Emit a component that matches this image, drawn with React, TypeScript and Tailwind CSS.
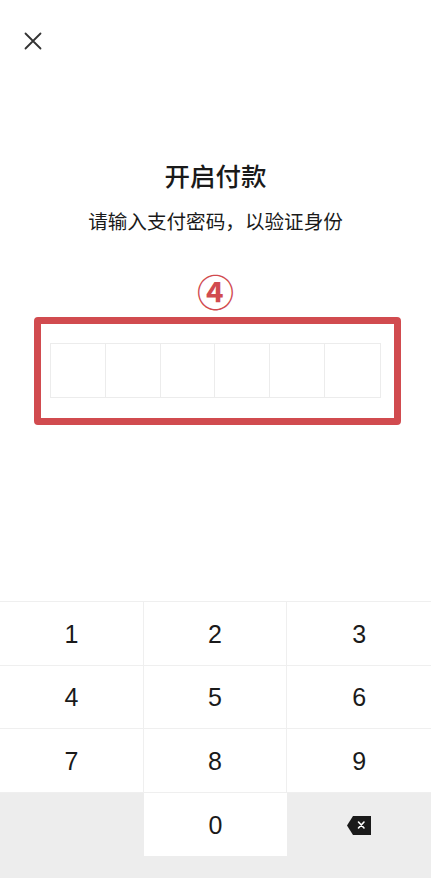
import React from "react";

const font = { fontFamily: '"Liberation Sans", "Noto Sans CJK SC", sans-serif' };

function Key({ label, className = "" }: { label: string; className?: string }) {
  return (
    <div className={`flex h-[63.5px] items-center justify-center pt-[2px] text-[25px] text-[#1a1a1a] ${className}`}>
      {label}
    </div>
  );
}

export default function App() {
  return (
    <div className="flex h-[878px] w-[431px] flex-col overflow-hidden bg-white" style={font}>
      <div className="flex h-[82px] items-start pl-[24px] pt-[32px]">
        <svg width="18" height="18" viewBox="0 0 18 18" fill="none">
          <path d="M1.5 1.5L16.5 16.5M16.5 1.5L1.5 16.5" stroke="#333" strokeWidth="1.8" strokeLinecap="round" />
        </svg>
      </div>
      <div className="mt-[78px] text-center text-[25.5px] font-medium leading-[34px] text-[#1a1a1a]">开启付款</div>
      <div className="mt-[14px] text-center text-[19.6px] leading-[28px] text-[#1a1a1a]">请输入支付密码，以验证身份</div>
      <div className="mt-[39px] text-center text-[37px] font-bold leading-[40px] text-[#d14b4f]">④</div>
      <div className="ml-[34px] mt-[2px] w-[367px] rounded-[4px] border-[7px] border-[#d14b4f] pl-[9px] pr-[13px] pt-[19px] pb-[20px]">
        <div className="grid h-[55px] w-[331px] grid-cols-6 border border-[#ececec]">
          {[0, 1, 2, 3, 4, 5].map((i) => (
            <div key={i} className={i < 5 ? "border-r border-[#ececec]" : ""} />
          ))}
        </div>
      </div>
      <div className="flex-1" />
      <div className="grid grid-cols-3 border-t border-[#efefef] bg-[#ededed]">
        {["1", "2", "3", "4", "5", "6", "7", "8", "9"].map((d, i) => (
          <Key
            key={d}
            label={d}
            className={`bg-white border-b border-[#efefef] ${i % 3 !== 2 ? "border-r" : ""}`}
          />
        ))}
        <div className="h-[63.5px]" />
        <Key label="0" className="bg-white" />
        <div className="flex h-[63.5px] items-center justify-center pt-[2px]">
          <svg width="24" height="19" viewBox="0 0 24 19">
            <path d="M6 0H24V19H6L0 9.5Z" fill="#1a1a1a" />
            <path d="M11.5 6L17 12M17 6L11.5 12" stroke="#fff" strokeWidth="1.6" strokeLinecap="round" />
          </svg>
        </div>
      </div>
      <div className="h-[22px] bg-[#ededed]" />
    </div>
  );
}
